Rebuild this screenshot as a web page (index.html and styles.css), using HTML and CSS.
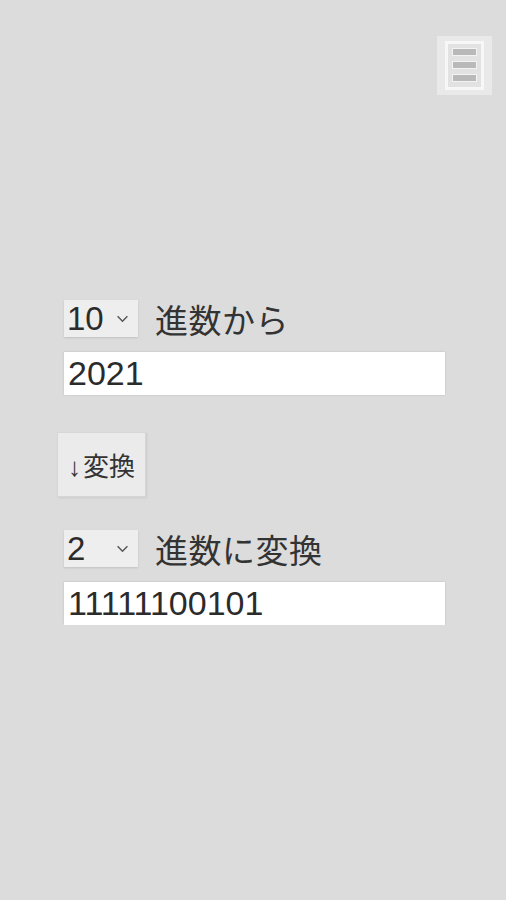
FILE: index.html
```html
<!DOCTYPE html>
<html lang="ja">
<head>
<meta charset="utf-8">
<title>進数変換</title>
<link rel="stylesheet" href="styles.css">
</head>
<body>
<header class="top">
  <button class="menu" type="button" aria-label="メニュー">
    <span class="menu-frame">
      <span class="bar"></span>
      <span class="bar"></span>
      <span class="bar"></span>
    </span>
  </button>
</header>
<main class="form">
  <div class="row">
    <div class="select-wrap">
      <select class="base">
        <option>10</option>
      </select>
      <svg class="chev" viewBox="0 0 14 9" width="13" height="8"><path d="M1.5 1.5 L7 7 L12.5 1.5" fill="none" stroke="#555" stroke-width="1.6"/></svg>
    </div>
    <span class="label">進数から</span>
  </div>
  <input class="field" type="text" value="2021">
  <button class="convert" type="button"><span class="arrow">↓</span>変換</button>
  <div class="row row-second">
    <div class="select-wrap">
      <select class="base">
        <option>2</option>
      </select>
      <svg class="chev" viewBox="0 0 14 9" width="13" height="8"><path d="M1.5 1.5 L7 7 L12.5 1.5" fill="none" stroke="#555" stroke-width="1.6"/></svg>
    </div>
    <span class="label">進数に変換</span>
  </div>
  <input class="field" type="text" value="11111100101">
</main>
</body>
</html>
```
FILE: styles.css
```css
html, body {
  margin: 0;
  padding: 0;
  background: #dcdcdc;
  font-family: "Liberation Sans", "Noto Sans CJK JP", sans-serif;
  color: #2b2b2b;
}

.top {
  display: flex;
  justify-content: flex-end;
  padding: 36px 14px 0 0;
}

.menu {
  width: 55px;
  height: 59px;
  padding: 5px;
  margin: 0;
  border: none;
  background: #e9e9e9;
  display: flex;
  align-items: stretch;
  justify-content: center;
}

.menu-frame {
  flex: 1;
  border: 3px solid #f7f7f7;
  background: #e2e2e2;
  display: flex;
  flex-direction: column;
  align-items: center;
  gap: 7px;
  padding-top: 5px;
  margin: 0 3px;
}

.bar {
  width: 23px;
  height: 6px;
  background: #b9b9b9;
  box-shadow: 0 0 0 1px #f3f3f3;
}

.form {
  display: flex;
  flex-direction: column;
  align-items: flex-start;
  padding: 205px 0 0 64px;
}

.row {
  display: flex;
  align-items: center;
  gap: 17px;
  height: 37px;
}

.row-second {
  margin-top: 33px;
}

.select-wrap {
  position: relative;
  width: 74px;
  height: 37px;
}

.base {
  appearance: none;
  -webkit-appearance: none;
  width: 100%;
  height: 100%;
  border: none;
  border-radius: 0;
  background: #eeeeee;
  box-shadow: 0 1px 2px rgba(0,0,0,0.12);
  font-family: inherit;
  font-size: 33px;
  color: #2b2b2b;
  padding: 0 0 0 3px;
  margin: 0;
  line-height: 37px;
}

.chev {
  position: absolute;
  right: 9px;
  top: 15px;
  pointer-events: none;
}

.label {
  font-size: 33px;
  color: #333;
  letter-spacing: 0.5px;
}

.field {
  margin-top: 15px;
  width: 381px;
  height: 43px;
  box-sizing: border-box;
  border: none;
  border-radius: 0;
  background: #ffffff;
  box-shadow: 0 0 2px rgba(0,0,0,0.15);
  font-family: inherit;
  font-size: 34px;
  color: #2b2b2b;
  padding: 0 0 0 4px;
  outline: none;
}

.convert {
  margin: 37px 0 0 -7px;
  width: 89px;
  height: 65px;
  box-sizing: border-box;
  border: 1px solid #d6d6d6;
  border-radius: 0;
  background: #ebebeb;
  box-shadow: 1px 1px 2px rgba(0,0,0,0.08);
  font-family: inherit;
  font-size: 26px;
  color: #333;
  padding: 0;
}

.arrow {
  font-family: "Liberation Sans", sans-serif;
  color: #333;
  margin-right: 2px;
}
```
